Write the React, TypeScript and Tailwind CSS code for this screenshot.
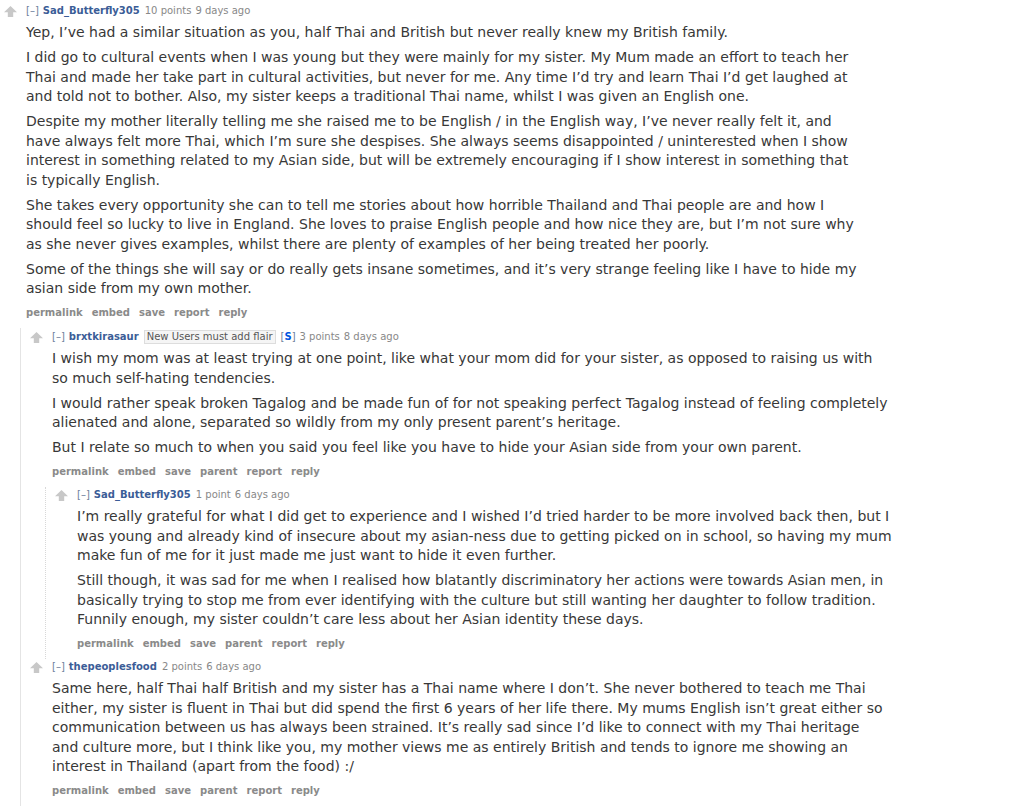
import React from "react";

type CommentData = {
  author: string;
  flair?: string;
  submitter?: boolean;
  score: string;
  age: string;
  paragraphs: string[][];
  buttons: string[];
};

const UpArrow = () => (
  <svg width="13" height="11" viewBox="0 0 13 11" className="block">
    <path d="M6.5 0 L13 6.2 H9.2 V11 H3.8 V6.2 H0 Z" fill="#c8c8c8" />
  </svg>
);

function Tagline({ c }: { c: CommentData }) {
  return (
    <div className="flex items-center whitespace-nowrap text-[10px] leading-[16px] text-[#888]">
      <span className="mr-[4px] text-[#6d7e9c]">[–]</span>
      <span className="mr-[5px] font-bold text-[#3b5d97]">{c.author}</span>
      {c.flair && (
        <span className="mr-[5px] border border-[#ddd] bg-[#f5f5f5] px-[2px] text-[10px] leading-[12px] text-[#555]">
          {c.flair}
        </span>
      )}
      {c.submitter && (
        <span className="mr-[4px] text-[#6d7e9c]">
          [<span className="font-bold text-[#0055df]">S</span>]
        </span>
      )}
      <span className="mr-[4px]">{c.score}</span>
      <span>{c.age}</span>
    </div>
  );
}

function Comment({
  c,
  children,
}: {
  c: CommentData;
  children?: React.ReactNode;
}) {
  return (
    <div>
      <div className="flex pb-[7px]">
        <div className="w-[22px] shrink-0 pt-[3px]">
          <UpArrow />
        </div>
        <div className="min-w-0">
          <Tagline c={c} />
          <div className="mt-[4px] text-[14px] leading-[19.5px] text-[#383838]">
            {c.paragraphs.map((lines, i) => (
              <p key={i} className="mb-[5.5px] whitespace-nowrap">
                {lines.map((l, j) => (
                  <React.Fragment key={j}>
                    {l}
                    {j < lines.length - 1 && <br />}
                  </React.Fragment>
                ))}
              </p>
            ))}
          </div>
          <div className="flex gap-[9px] text-[10px] font-bold leading-[17px] text-[#8a8a8a]">
            {c.buttons.map((b) => (
              <span key={b}>{b}</span>
            ))}
          </div>
        </div>
      </div>
      {children}
    </div>
  );
}

const top: CommentData = {
  author: "Sad_Butterfly305",
  score: "10 points",
  age: "9 days ago",
  buttons: ["permalink", "embed", "save", "report", "reply"],
  paragraphs: [
    [
      "Yep, I’ve had a similar situation as you, half Thai and British but never really knew my British family.",
    ],
    [
      "I did go to cultural events when I was young but they were mainly for my sister. My Mum made an effort to teach her",
      "Thai and made her take part in cultural activities, but never for me. Any time I’d try and learn Thai I’d get laughed at",
      "and told not to bother. Also, my sister keeps a traditional Thai name, whilst I was given an English one.",
    ],
    [
      "Despite my mother literally telling me she raised me to be English / in the English way, I’ve never really felt it, and",
      "have always felt more Thai, which I’m sure she despises. She always seems disappointed / uninterested when I show",
      "interest in something related to my Asian side, but will be extremely encouraging if I show interest in something that",
      "is typically English.",
    ],
    [
      "She takes every opportunity she can to tell me stories about how horrible Thailand and Thai people are and how I",
      "should feel so lucky to live in England. She loves to praise English people and how nice they are, but I’m not sure why",
      "as she never gives examples, whilst there are plenty of examples of her being treated her poorly.",
    ],
    [
      "Some of the things she will say or do really gets insane sometimes, and it’s very strange feeling like I have to hide my",
      "asian side from my own mother.",
    ],
  ],
};

const reply1: CommentData = {
  author: "brxtkirasaur",
  flair: "New Users must add flair",
  submitter: true,
  score: "3 points",
  age: "8 days ago",
  buttons: ["permalink", "embed", "save", "parent", "report", "reply"],
  paragraphs: [
    [
      "I wish my mom was at least trying at one point, like what your mom did for your sister, as opposed to raising us with",
      "so much self-hating tendencies.",
    ],
    [
      "I would rather speak broken Tagalog and be made fun of for not speaking perfect Tagalog instead of feeling completely",
      "alienated and alone, separated so wildly from my only present parent’s heritage.",
    ],
    [
      "But I relate so much to when you said you feel like you have to hide your Asian side from your own parent.",
    ],
  ],
};

const reply2: CommentData = {
  author: "Sad_Butterfly305",
  score: "1 point",
  age: "6 days ago",
  buttons: ["permalink", "embed", "save", "parent", "report", "reply"],
  paragraphs: [
    [
      "I’m really grateful for what I did get to experience and I wished I’d tried harder to be more involved back then, but I",
      "was young and already kind of insecure about my asian-ness due to getting picked on in school, so having my mum",
      "make fun of me for it just made me just want to hide it even further.",
    ],
    [
      "Still though, it was sad for me when I realised how blatantly discriminatory her actions were towards Asian men, in",
      "basically trying to stop me from ever identifying with the culture but still wanting her daughter to follow tradition.",
      "Funnily enough, my sister couldn’t care less about her Asian identity these days.",
    ],
  ],
};

const reply3: CommentData = {
  author: "thepeoplesfood",
  score: "2 points",
  age: "6 days ago",
  buttons: ["permalink", "embed", "save", "parent", "report", "reply"],
  paragraphs: [
    [
      "Same here, half Thai half British and my sister has a Thai name where I don’t. She never bothered to teach me Thai",
      "either, my sister is fluent in Thai but did spend the first 6 years of her life there. My mums English isn’t great either so",
      "communication between us has always been strained. It’s really sad since I’d like to connect with my Thai heritage",
      "and culture more, but I think like you, my mother views me as entirely British and tends to ignore me showing an",
      "interest in Thailand (apart from the food) :/",
    ],
  ],
};

export default function App() {
  return (
    <div className="h-[806px] w-[1024px] overflow-hidden bg-white pl-[4px] pt-[3px] font-['DejaVu_Sans',Verdana,sans-serif]">
      <Comment c={top}>
        <div className="ml-[16px] border-l border-[#e4e4e4] pl-[9px] pt-[1px]">
          <Comment c={reply1}>
            <div className="ml-[15px] border-l border-dotted border-[#d8d8d8] pl-[9px]">
              <Comment c={reply2} />
            </div>
          </Comment>
          <Comment c={reply3} />
          <div className="h-[200px]" />
        </div>
      </Comment>
    </div>
  );
}
